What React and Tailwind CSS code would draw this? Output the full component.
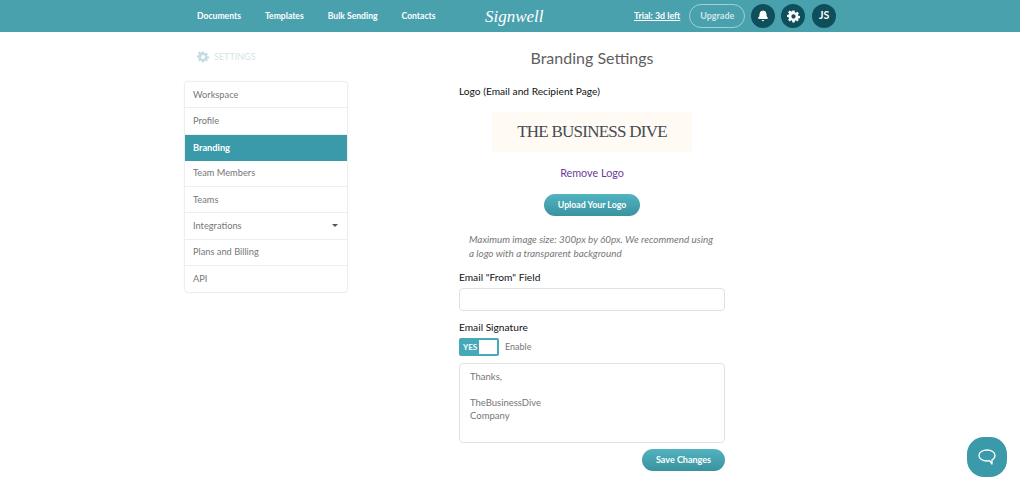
import { Bell } from "lucide-react";

const sideItems = ["Workspace", "Profile", "Branding", "Team Members", "Teams", "Integrations", "Plans and Billing", "API"];
const navItems = ["Documents", "Templates", "Bulk Sending", "Contacts"];

function GearIcon({ className }) {
  return (
    <svg viewBox="0 0 24 24" className={className} fill="currentColor">
      <path
        fillRule="evenodd"
        d="M10 1h4l.6 3.2 1.7.7L19 3l3 3-1.9 2.7.7 1.7 3.2.6v4l-3.2.6-.7 1.7L22 18l-3 3-2.7-1.9-1.7.7L14 23h-4l-.6-3.2-1.7-.7L5 21l-3-3 1.9-2.7-.7-1.7L0 13V9l3.2-.6.7-1.7L2 4l3-3 2.7 1.9 1.7-.7zM12 8a4 4 0 1 0 0 8 4 4 0 0 0 0-8z"
      />
    </svg>
  );
}

export default function App() {
  return (
    <div className="relative h-[479px] overflow-hidden bg-white font-['Lato','Open_Sans',sans-serif] text-[#666]">
      {/* Header */}
      <div className="flex h-8 items-center bg-[#4aa1ae] pl-[197px] text-white">
        <div className="flex w-[288px] gap-6 text-[8.6px] font-bold">
          {navItems.map((item) => (
            <span key={item}>{item}</span>
          ))}
        </div>
        <span className="w-[149px] font-['Liberation_Serif',serif] text-[17px] leading-none italic">Signwell</span>
        <span className="text-[8.8px] font-bold underline">Trial: 3d left</span>
        <span className="ml-[9px] flex h-6 w-14 items-center justify-center rounded-full border border-[#a5d0d6] text-[9px] font-bold text-[#cfe6e9]">
          Upgrade
        </span>
        <span className="ml-[6px] flex h-6 w-6 items-center justify-center rounded-full bg-[#0f4f5b]">
          <Bell size={12} fill="currentColor" />
        </span>
        <span className="ml-[6px] flex h-6 w-6 items-center justify-center rounded-full bg-[#0f4f5b]">
          <GearIcon className="h-[13px] w-[13px]" />
        </span>
        <span className="ml-[7px] flex h-6 w-6 items-center justify-center rounded-full bg-[#0f4f5b] text-[10.5px] font-bold">
          JS
        </span>
      </div>

      <div className="flex pl-[184px]">
        {/* Sidebar */}
        <div className="w-[164px]">
          <div className="flex h-[49px] items-center gap-[5px] pt-[1px] pl-[13px] text-[9px] text-[#d5e4e7]">
            <GearIcon className="h-[12px] w-[12px] text-[#c5dde1]" />
            <span>SETTINGS</span>
          </div>
          <div className="rounded border border-[#eeeeee] shadow-[0_0_2px_rgba(0,0,0,0.06)]">
            {sideItems.map((item, i) => (
              <div
                key={item}
                className={`flex h-[26.25px] items-center justify-between px-2 text-[9.25px] ${
                  item === "Branding"
                    ? "bg-[#3a9aa9] font-bold text-white"
                    : `text-[#777] ${i < sideItems.length - 1 ? "border-b border-[#eeeeee]" : ""}`
                }`}
              >
                <span>{item}</span>
                {item === "Integrations" && (
                  <span className="mr-[1px] h-0 w-0 border-x-[3px] border-t-[3px] border-x-transparent border-t-[#555]" />
                )}
              </div>
            ))}
          </div>
        </div>

        {/* Branding form */}
        <div className="ml-[111px] w-[266px]">
          <h1 className="mt-[15px] text-center text-[16px] leading-[22px] font-normal text-[#5f5f5f]">Branding Settings</h1>
          <p className="mt-[15px] text-[10.2px] leading-[14px] text-[#111]">Logo (Email and Recipient Page)</p>
          <div className="mx-auto mt-[14px] flex h-10 w-[200px] items-center justify-center bg-[#fffaf4] font-['Liberation_Serif',serif] text-[17px] tracking-[-0.75px] text-[#444a52]">
            THE BUSINESS DIVE
          </div>
          <p className="mt-[14px] text-center text-[10.8px] leading-[14px] text-[#6b3a97]">Remove Logo</p>
          <button className="mx-auto mt-[14px] flex h-[22px] w-24 items-center justify-center rounded-full bg-gradient-to-b from-[#52b3c1] to-[#3a929f] text-[8.75px] font-bold text-white">
            Upload Your Logo
          </button>
          <p className="mt-[16px] px-[10px] text-[9.9px] leading-[14px] text-[#777] italic">
            Maximum image size: 300px by 60px. We recommend using a logo with a transparent background
          </p>
          <p className="mt-[10px] text-[10.2px] leading-[14px] text-[#111]">Email "From" Field</p>
          <input className="mt-[4px] block h-[23px] w-full rounded-sm border border-[#e2e2e2]" />
          <p className="mt-[9px] text-[10.2px] leading-[14px] text-[#111]">Email Signature</p>
          <div className="mt-[4px] flex items-center gap-[6px]">
            <div className="flex h-[18px] w-10 items-center rounded-[2px] bg-[#45a9b9] pr-[2px] pl-1">
              <span className="w-4 text-[8px] font-bold text-white">YES</span>
              <span className="ml-auto h-[14px] w-[18px] bg-white" />
            </div>
            <span className="text-[9px] text-[#777]">Enable</span>
          </div>
          <div className="mt-[7px] h-[80px] rounded-sm border border-[#e2e2e2] px-[10px] pt-[6px] text-[9.5px] leading-[13px] text-[#777]">
            <p>Thanks,</p>
            <p className="mt-[13px]">TheBusinessDive</p>
            <p>Company</p>
          </div>
          <div className="mt-[6px] flex justify-end">
            <button className="flex h-[22px] w-[83px] items-center justify-center rounded-full bg-gradient-to-b from-[#52b3c1] to-[#3a929f] text-[9px] font-bold text-white">
              Save Changes
            </button>
          </div>
        </div>
      </div>

      {/* Chat launcher */}
      <div className="absolute top-[437px] left-[967px] flex h-10 w-10 items-center justify-center rounded-[17px] bg-[#3a9aa9] text-white">
        <svg viewBox="0 0 18 16" className="h-4 w-[18px]" fill="none" stroke="currentColor" strokeWidth="1.3" strokeLinejoin="round">
          <path d="M9 1C4.6 1 1 3.2 1 6.5S4.6 12 9 12c.9 0 1.8-.1 2.6-.3L14 15v-4.2c1.9-1 3-2.5 3-4.3C17 3.2 13.4 1 9 1z" />
        </svg>
      </div>
    </div>
  );
}
